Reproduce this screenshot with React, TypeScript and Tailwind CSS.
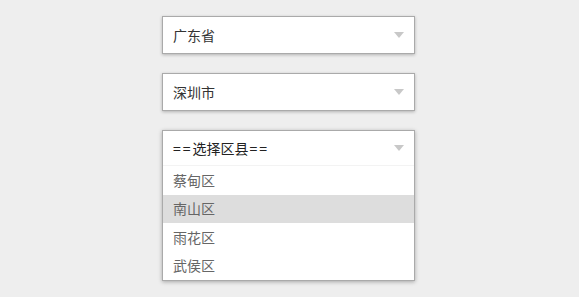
import { useState } from "react"

const districts = ["蔡甸区", "南山区", "雨花区", "武侯区"]

const Arrow = () => (
    <svg width="10" height="6" viewBox="0 0 10 6" className="shrink-0">
        <polygon points="0,0 10,0 5,6" fill="#c8c8c8" />
    </svg>
)

const SelectBox = ({ label }: { label: string }) => (
    <div className="flex items-center justify-between h-[38px] pl-[10px] pr-[10px] bg-white border border-[#aaaaaa] shadow-[0_1px_3px_rgba(0,0,0,0.25)]">
        <span className="text-[14px] text-[#333]">{label}</span>
        <Arrow />
    </div>
)

export default function App() {
    const [hover] = useState(1)
    return (
        <div className="w-full h-[297px] bg-[#eeeeee] font-['Noto_Sans_CJK_SC','Microsoft_YaHei',sans-serif]">
            <div className="w-[253px] ml-[162px] pt-[16px] flex flex-col">
                <SelectBox label="广东省" />
                <div className="mt-[19px]">
                    <SelectBox label="深圳市" />
                </div>
                <div className="mt-[19px] bg-white border border-[#aaaaaa] shadow-[0_1px_4px_rgba(0,0,0,0.3)]">
                    <div className="flex items-center justify-between h-[35px] pl-[10px] pr-[10px] border-b border-[#f3f3f3]">
                        <span className="text-[14px] text-[#222]">
                            <span className="tracking-[2px]">==</span>选择区县<span className="tracking-[2px] ml-[1px]">==</span>
                        </span>
                        <Arrow />
                    </div>
                    {districts.map((d, i) => (
                        <div
                            key={d}
                            className={`flex items-center h-[28.5px] pl-[10px] text-[14px] text-[#666] ${i === hover ? "bg-[#dddddd]" : ""}`}
                        >
                            {d}
                        </div>
                    ))}
                </div>
            </div>
        </div>
    )
}
